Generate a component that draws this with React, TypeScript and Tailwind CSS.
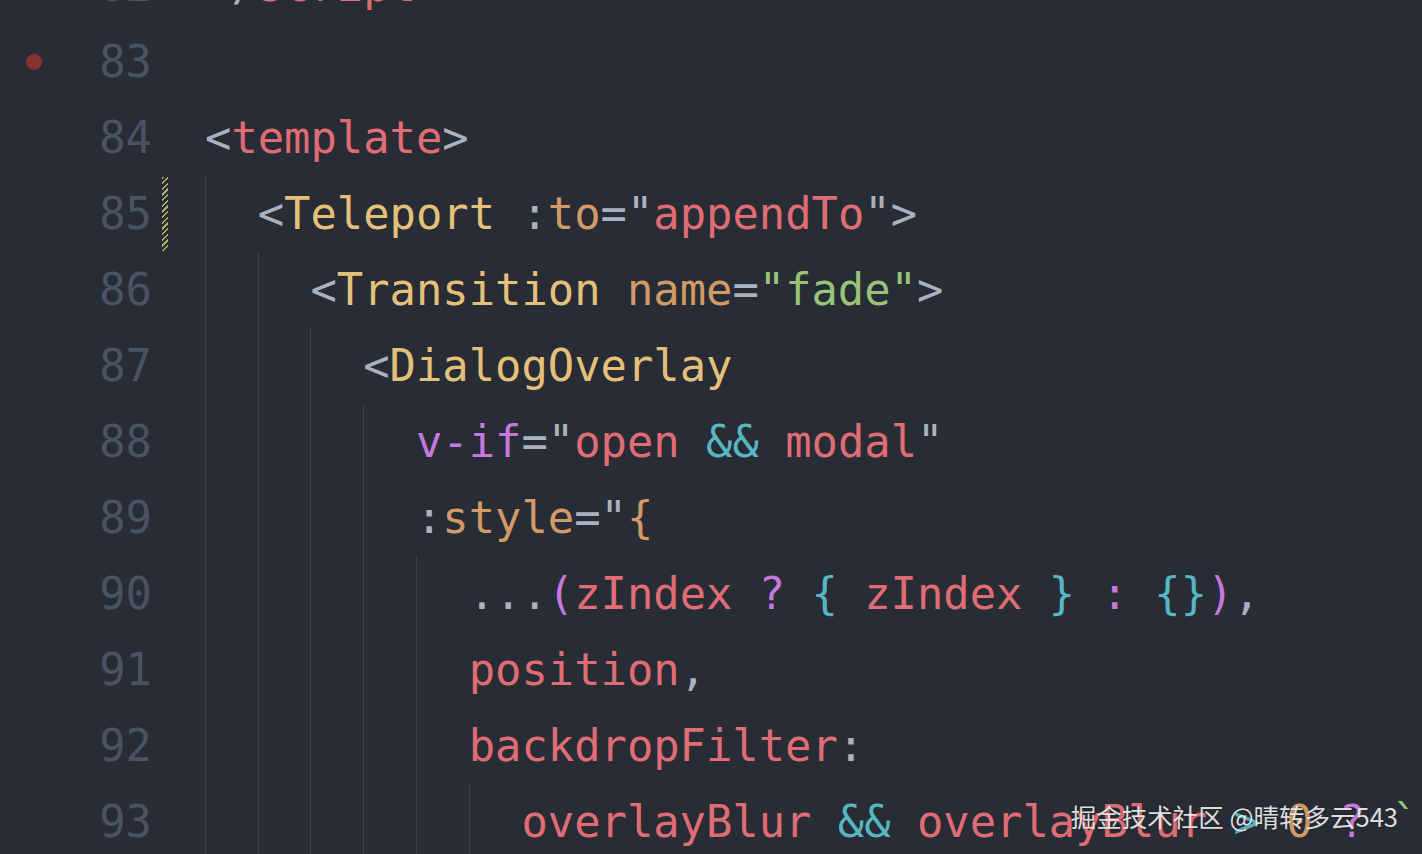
import React from "react";

type Tok = [string, string];

const G = "text-[#abb2bf]";
const R = "text-[#e06c75]";
const Y = "text-[#e5c07b]";
const O = "text-[#d19a66]";
const GR = "text-[#98c379]";
const P = "text-[#c678dd]";
const C = "text-[#56b6c2]";

type Line = { n: number; indent: number; toks: Tok[]; bp?: boolean; mark?: boolean };

const lines: Line[] = [
  { n: 82, indent: 0, toks: [["<", G], ["/", G], ["script", R], [">", G]] },
  { n: 83, indent: 0, toks: [], bp: true },
  { n: 84, indent: 0, toks: [["<", G], ["template", R], [">", G]] },
  {
    n: 85,
    indent: 1,
    mark: true,
    toks: [["<", G], ["Teleport", Y], [" ", G], [":", G], ["to", O], ["=", G], ['"', G], ["appendTo", R], ['"', G], [">", G]],
  },
  {
    n: 86,
    indent: 2,
    toks: [["<", G], ["Transition", Y], [" ", G], ["name", O], ["=", G], ['"fade"', GR], [">", G]],
  },
  { n: 87, indent: 3, toks: [["<", G], ["DialogOverlay", Y]] },
  {
    n: 88,
    indent: 4,
    toks: [["v-if", P], ["=", G], ['"', G], ["open", R], [" ", G], ["&&", C], [" ", G], ["modal", R], ['"', G]],
  },
  { n: 89, indent: 4, toks: [[":", G], ["style", O], ["=", G], ['"', G], ["{", O]] },
  {
    n: 90,
    indent: 5,
    toks: [
      ["...", G],
      ["(", P],
      ["zIndex", R],
      [" ", G],
      ["?", P],
      [" ", G],
      ["{", C],
      [" ", G],
      ["zIndex", R],
      [" ", G],
      ["}", C],
      [" ", G],
      [":", P],
      [" ", G],
      ["{}", C],
      [")", P],
      [",", G],
    ],
  },
  { n: 91, indent: 5, toks: [["position", R], [",", G]] },
  { n: 92, indent: 5, toks: [["backdropFilter", R], [":", G]] },
  {
    n: 93,
    indent: 6,
    toks: [
      ["overlayBlur", R],
      [" ", G],
      ["&&", C],
      [" ", G],
      ["overlayBlur", R],
      [" ", G],
      [">", C],
      [" ", G],
      ["0", O],
      [" ", G],
      ["?", P],
      [" ", G],
      ["`", GR],
    ],
  },
];

export default function App() {
  return (
    <div
      className="relative h-screen w-full overflow-hidden bg-[#282c34]"
      style={{ fontFamily: '"DejaVu Sans Mono", "Liberation Mono", monospace' }}
    >
      <div className="-mt-[52px] flex flex-col">
        {lines.map((l) => (
          <div key={l.n} className="flex h-[76px] items-stretch text-[43.8px] leading-[76px]">
            <div className="flex w-[68px] items-center justify-center">
              {l.bp && <div className="h-[16px] w-[16px] rounded-full bg-[#8c2f33]" />}
            </div>
            <div className="w-[84px] text-right text-[#4b5263]">{l.n}</div>
            <div className="w-[10px]" />
            <div className="flex w-[7px] items-stretch py-[1px]">
              {l.mark && (
                <div className="w-[6px] bg-[repeating-linear-gradient(135deg,#b0ad66_0px,#b0ad66_1.6px,transparent_1.6px,transparent_4px)]" />
              )}
            </div>
            <div className="w-[36px]" />
            <div className="flex items-stretch whitespace-pre">
              {Array.from({ length: l.indent }).map((_, i) => (
                <span key={i} className="inline-block w-[2ch] border-l border-[#3d414a]" />
              ))}
              <span>
                {l.toks.map((t, i) => (
                  <span key={i} className={t[1]}>
                    {t[0]}
                  </span>
                ))}
              </span>
            </div>
          </div>
        ))}
      </div>
      <div
        className="absolute bottom-[21px] right-[24px] text-[25.5px] leading-[34px] text-white/85 [text-shadow:0_0_2px_rgba(0,0,0,0.5)]"
        style={{ fontFamily: '"Noto Sans CJK SC", "Noto Sans", sans-serif' }}
      >
        掘金技术社区 @晴转多云543
      </div>
    </div>
  );
}
